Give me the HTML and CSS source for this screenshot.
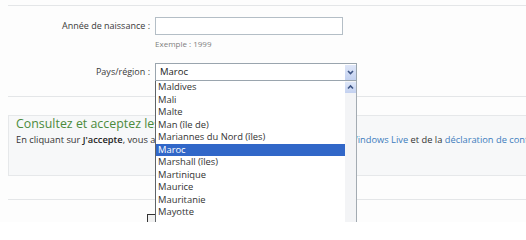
FILE: index.html
```html
<!DOCTYPE html>
<html lang="fr">
<head>
<meta charset="utf-8">
<title>Inscription</title>
<link rel="stylesheet" href="styles.css">
</head>
<body>
<div class="page">
  <div class="rule rule-top"></div>
  <div class="form">
    <div class="row">
      <label class="lbl">Année de naissance :</label>
      <div class="field">
        <div class="input"></div>
        <div class="hint">Exemple : 1999</div>
      </div>
    </div>
    <div class="row row-country">
      <label class="lbl">Pays/région :</label>
      <div class="field">
        <div class="select">
          <span class="value">Maroc</span>
          <span class="arrow-btn"><svg width="11" height="15" viewBox="0 0 11 15"><path d="M3 6 L5.5 8.5 L8 6" fill="none" stroke="#3e5585" stroke-width="1.6"/></svg></span>
        </div>
      </div>
    </div>
  </div>
  <div class="rule rule-mid"></div>
  <section class="terms">
    <h2 class="terms-title">Consultez et acceptez les termes</h2>
    <p class="terms-text">En cliquant sur <b>J'accepte</b>, vous acceptez les termes du contrat de services de <a class="link" href="#">Windows Live</a> et de la <a class="link" href="#">déclaration de confidentialité</a>.</p>
  </section>
  <div class="rule rule-low"></div>
  <div class="actions"><button class="btn">J'accepte</button></div>

  <div class="dropdown">
    <ul class="options">
      <li>Maldives</li>
      <li>Mali</li>
      <li>Malte</li>
      <li>Man (île de)</li>
      <li>Mariannes du Nord (îles)</li>
      <li class="selected">Maroc</li>
      <li>Marshall (îles)</li>
      <li>Martinique</li>
      <li>Maurice</li>
      <li>Mauritanie</li>
      <li>Mayotte</li>
    </ul>
    <div class="scroll">
      <span class="arrow-btn up"><svg width="11" height="11" viewBox="0 0 11 11"><path d="M3 6.5 L5.5 4 L8 6.5" fill="none" stroke="#3e5585" stroke-width="1.6"/></svg></span>
    </div>
  </div>
</div>
</body>
</html>
```
FILE: styles.css
```css
html, body {
  margin: 0;
  padding: 0;
  background: #ffffff;
  overflow: hidden;
}
body {
  font-family: "Open Sans", "DejaVu Sans", sans-serif;
  color: #333;
  width: 526px;
  height: 222px;
}
.page {
  position: relative;
  padding-left: 8px;
  height: 222px;
  background: #fdfdfd;
  overflow: hidden;
}
.rule {
  height: 1px;
  background: #e4e6e8;
}
.rule-top { margin-top: 5px; }
.form {
  padding-top: 11px;
  display: flex;
  flex-direction: column;
  gap: 13px;
}
.row {
  display: grid;
  grid-template-columns: 142px 1fr;
  column-gap: 5px;
  align-items: start;
}
.lbl {
  text-align: right;
  font-size: 9px;
  line-height: 18px;
  color: #3a3a3a;
}
.input {
  width: 186px;
  height: 16px;
  border: 1px solid #b4bec6;
  background: #fff;
}
.hint {
  margin-top: 3px;
  font-size: 8px;
  line-height: 12px;
  color: #7d7d7d;
}
.select {
  width: 200px;
  height: 16px;
  border: 1px solid #9aa5ae;
  background: #fff;
  display: flex;
  align-items: center;
  justify-content: space-between;
}
.value {
  padding-left: 4px;
  font-size: 9.5px;
  line-height: 16px;
  color: #222;
}
.arrow-btn {
  display: flex;
  align-items: center;
  justify-content: center;
  width: 11px;
  height: 15px;
  background: linear-gradient(#dfe7f8, #c3d1f0);
  box-sizing: border-box;
}
.arrow-btn svg { display: block; }
.rule-mid { margin-top: 15px; }
.terms {
  margin-top: 18px;
  height: 59px;
  border: 1px solid #e6e8ea;
  border-right: 0;
  background: #f7f8f9;
  padding-left: 7px;
}
.terms-title {
  margin: 0;
  font-weight: normal;
  font-size: 12.4px;
  line-height: 16px;
  color: #4b8a3c;
  white-space: nowrap;
}
.terms-text {
  margin: 1px 0 0;
  font-size: 9.3px;
  line-height: 13px;
  color: #333;
  white-space: nowrap;
}
.terms-text b { font-weight: 600; color: #222; }
.link { color: #3d7cbd; text-decoration: none; }
.rule-low { margin-top: 23px; }
.actions {
  padding-top: 12px;
  padding-left: 139px;
}
.btn {
  width: 110px;
  height: 22px;
  border: 1px solid #333;
  background: #f0f0f0;
  font-family: inherit;
  font-size: 10px;
  padding: 0;
}
.dropdown {
  position: absolute;
  left: 155px;
  top: 81px;
  width: 200px;
  height: 141px;
  border-left: 1px solid #5f6468;
  border-right: 1px solid #a3abb2;
  background: #fff;
  display: flex;
}
.options {
  list-style: none;
  margin: 0;
  padding: 0;
  flex: 1;
}
.options li {
  height: 12.5px;
  line-height: 12.5px;
  padding-left: 2px;
  font-size: 9.4px;
  color: #333;
  white-space: nowrap;
}
.options li.selected {
  background: #3167c8;
  color: #fff;
}
.scroll {
  width: 11px;
  background: #f3f4f6;
  padding-top: 1px;
}
.arrow-btn.up {
  height: 11px;
}
```
